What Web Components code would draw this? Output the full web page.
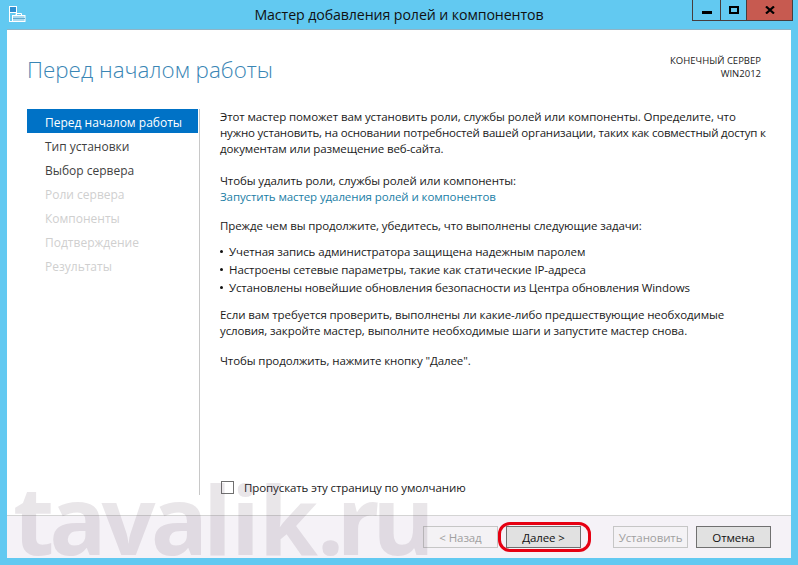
<!DOCTYPE html>
<html lang="ru"><head><meta charset="utf-8"><title>Мастер</title>
<style>
html,body{margin:0;padding:0;width:798px;height:565px;overflow:hidden}
body{font-family:"Open Sans","Noto Sans",sans-serif;font-size:11.5px;letter-spacing:-.1px;color:#1a1a1a}
</style></head><body>
<wizard-window>
  <title-bar slot="title">Мастер добавления ролей и компонентов</title-bar>
  <wizard-header slot="header" heading="Перед началом работы"><span>КОНЕЧНЫЙ СЕРВЕР</span><span>WIN2012</span></wizard-header>
  <wizard-nav slot="nav">
    <nav-item state="active">Перед началом работы</nav-item>
    <nav-item>Тип установки</nav-item>
    <nav-item>Выбор сервера</nav-item>
    <nav-item state="off">Роли сервера</nav-item>
    <nav-item state="off">Компоненты</nav-item>
    <nav-item state="off">Подтверждение</nav-item>
    <nav-item state="off">Результаты</nav-item>
  </wizard-nav>
  <wizard-body slot="body"></wizard-body>
  <wizard-footer slot="footer">
    <wiz-button disabled>&lt; Назад</wiz-button>
    <wiz-button ring>Далее &gt;</wiz-button>
    <wiz-button disabled gap>Установить</wiz-button>
    <wiz-button>Отмена</wiz-button>
  </wizard-footer>
</wizard-window>
<script>
function def(name, css, html){
  customElements.define(name, class extends HTMLElement{
    constructor(){super();const r=this.attachShadow({mode:'open'});r.innerHTML='<style>'+css+'</style>'+(typeof html==='function'?html(this):html);}
  });
}
def('wizard-window',`
:host{display:grid;grid-template-rows:30px 528px;width:798px;height:565px;background:#62c9f1;position:relative;overflow:hidden;box-sizing:border-box}
.page{margin:0 7px;background:#fff;display:grid;grid-template-columns:minmax(0,1fr);grid-template-rows:79px 1fr 43px;box-shadow:0 -1px 0 #8fb4c6;min-height:0;min-width:0}
.mid{display:grid;grid-template-columns:193px minmax(0,1fr);min-height:0}
.wm{position:absolute;left:13px;top:478px;font:700 95px/80px "Open Sans",sans-serif;color:rgba(90,70,90,.135);pointer-events:none;white-space:nowrap}
.wm span:nth-child(1){letter-spacing:-5px}.wm span:nth-child(2){letter-spacing:-1px}.wm span:nth-child(3){letter-spacing:-7.5px}.wm span:nth-child(4){letter-spacing:0}
`,`<slot name="title"></slot>
<div class="page"><slot name="header"></slot><div class="mid"><slot name="nav"></slot><slot name="body"></slot></div><slot name="footer"></slot></div>
<div class="wm"><span>tava</span><span>lik</span><span>.r</span><span>u</span></div>`);

def('title-bar',`
:host{display:grid;grid-template-columns:692px 101px;height:30px;position:relative}
.l{display:flex;align-items:center;padding-left:9px;position:relative;height:30px}
.ic{display:block;margin-top:-2px}
.t{position:absolute;left:0;width:798px;top:5px;text-align:center;font-size:14.2px;line-height:20px;color:#111;letter-spacing:-.1px}
.cap{display:flex;height:21px;align-self:start;box-sizing:border-box;border:1px solid #473d3d;border-top:0;width:101px;position:relative}
.cap i{display:flex;align-items:center;justify-content:center;box-sizing:border-box;border-right:1px solid #473d3d}
.cap i:nth-child(1){width:28px}.cap i:nth-child(2){width:26px}.cap i:nth-child(3){flex:1;background:#c75a50;border:0}
.cap svg{display:block}
`,`<div class="l"><svg class="ic" width="17" height="16" viewBox="0 0 17 16"><rect x=".5" y=".5" width="7" height="15" fill="#62c9f1" stroke="#fff"/><rect x="1" y="1" width="6" height="5" fill="#2f8fd0"/><path d="M.5 6.5h7" stroke="#fff"/><rect x="3.5" y="9.5" width="12.5" height="6" fill="#a9d9ee" stroke="#fff"/><path d="M7 9V7.5h5.5V9" fill="none" stroke="#fff"/><path d="M4 12.5h12" stroke="#5fa9cf"/></svg><div class="t"><slot></slot></div></div>
<div class="cap"><i><svg width="10" height="3" style="margin-top:4px"><rect width="10" height="3" fill="#000"/></svg></i><i><svg width="10" height="8"><rect x="1" y="1" width="8" height="6" fill="none" stroke="#000" stroke-width="2"/></svg></i><i><svg width="10" height="8"><path d="M1 .5 9 7.5M9 .5 1 7.5" stroke="#000" stroke-width="2.2" fill="none"/></svg></i></div>`);

def('wizard-header',`
:host{display:flex;justify-content:space-between;align-items:flex-start;padding:0 30px 0 20px;box-sizing:border-box}
h1{margin:24px 0 0;font:300 22.4px/32px "Open Sans",sans-serif;letter-spacing:0;color:#3a86b5}
.r{margin-top:24px;display:flex;flex-direction:column;align-items:flex-end;font-size:9.5px;letter-spacing:0;line-height:13px;color:#222}
::slotted(span){display:block}
`,el=>`<h1>${el.getAttribute('heading')}</h1><div class="r"><slot></slot></div>`);

def('wizard-nav',`
:host{display:block;padding-left:20px;min-height:0}
`,`<slot></slot>`);

def('nav-item',`
:host{display:block;height:24px;line-height:27px;padding-left:18px;font-size:12px;width:171px;box-sizing:border-box;color:#3f3f3f;white-space:nowrap;letter-spacing:0}
:host([state=active]){background:#0072c6;color:#fff}
:host([state=off]){color:#cfcfcf}
`,`<slot></slot>`);

def('wiz-para',`:host{display:block;line-height:16px;margin-bottom:16px;white-space:nowrap}`,`<slot></slot>`);

def('wizard-body',`
:host{display:grid;grid-template-rows:1fr auto;border-left:1px solid #c8c8c8;padding:0 0 0 20px;margin-left:-1px;height:386px;box-sizing:border-box;min-width:0}
a{color:#1a7ea6;text-decoration:none}
wiz-para.tight{margin-bottom:13px}
ul{margin:0 0 10px;padding:0;list-style:none}
li{line-height:18px;white-space:nowrap;display:flex;gap:6px;align-items:center}
li b{width:3px;height:3px;border-radius:50%;background:#111;flex:none;margin-top:-2px}
.chk{display:flex;align-items:flex-start;gap:10px;height:14px;line-height:14px;padding-left:1px}
.chk i{width:13px;height:13px;box-sizing:border-box;border:1px solid #707070;flex:none}
`,`<div class="c">
<wiz-para>Этот мастер поможет вам установить роли, службы ролей или компоненты. Определите, что<br><span style="letter-spacing:-.19px">нужно установить, на основании потребностей вашей организации, таких как совместный доступ к</span><br>документам или размещение веб-сайта.</wiz-para>
<wiz-para class="tight">Чтобы удалить роли, службы ролей или компоненты:<br><a>Запустить мастер удаления ролей и компонентов</a></wiz-para>
<wiz-para style="margin-bottom:9px">Прежде чем вы продолжите, убедитесь, что выполнены следующие задачи:</wiz-para>
<ul><li><b></b>Учетная запись администратора защищена надежным паролем</li><li><b></b>Настроены сетевые параметры, такие как статические IP-адреса</li><li><b></b><span style="letter-spacing:-.14px">Установлены новейшие обновления безопасности из Центра обновления Windows</span></li></ul>
<wiz-para style="margin-bottom:14px">Если вам требуется проверить, выполнены ли какие-либо предшествующие необходимые<br>условия, закройте мастер, выполните необходимые шаги и запустите мастер снова.</wiz-para>
<wiz-para>Чтобы продолжить, нажмите кнопку "Далее".</wiz-para>
</div>
<div class="chk"><i></i><span>Пропускать эту страницу по умолчанию</span></div>`);

def('wizard-footer',`
:host{display:flex;align-items:flex-start;justify-content:flex-end;gap:8px;padding:10px 20px 0 0;box-sizing:border-box;background:#f5f2f7;border-top:1px solid #d4d4d4}
`,`<slot></slot>`);

def('wiz-button',`
:host{display:flex;align-items:center;justify-content:center;width:75px;height:22px;box-sizing:border-box;border:1px solid #707070;background:#e1e1e1;color:#111;position:relative}
:host([disabled]){background:#f4f2f5;border-color:#c6c6c6;color:#a0a0a0}
:host([gap]){margin-left:24px}
.ring{display:none;position:absolute;left:-9px;top:-5px;box-sizing:border-box;width:93px;height:30px;border:3px solid #e60012;border-radius:12px;pointer-events:none}
:host([ring]) .ring{display:block}
`,`<slot></slot><div class="ring"></div>`);
</script>
</body></html>
